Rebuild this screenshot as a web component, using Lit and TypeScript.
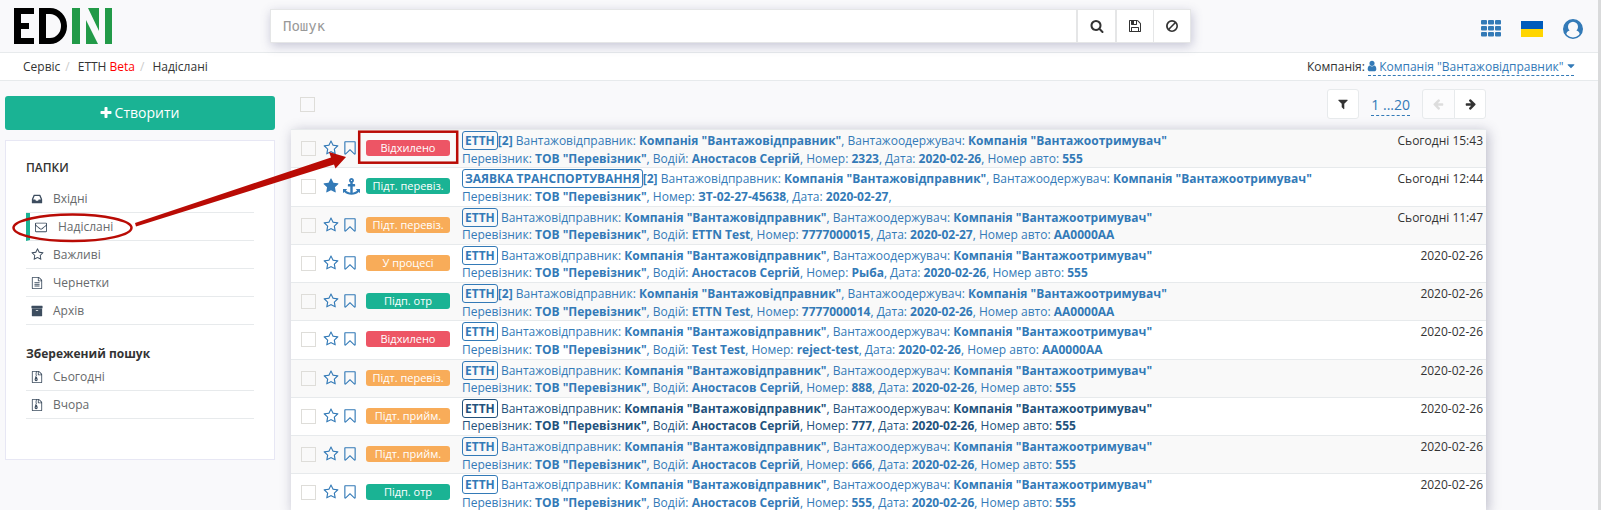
import { LitElement, html, css, svg } from "lit";
import { customElement, property } from "lit/decorators.js";

const PATHS: Record<string, string> = {
  "star-o": "M1201 1004l306-297-422-62-189-382-189 382-422 62 306 297-73 421 378-199 377 199zm527-357q0 22-26 48l-363 354 86 500q1 7 1 20 0 50-41 50-19 0-40-12l-449-236-449 236q-22 12-40 12-21 0-31.5-14.5t-10.5-35.5q0-6 2-20l86-500-364-354q-25-27-25-48 0-37 56-46l502-73 225-455q19-41 49-41t49 41l225 455 502 73q56 9 56 46z",
  star: "M1728 647q0 22-26 48l-363 354 86 500q1 7 1 20 0 21-10.5 35.5t-30.5 14.5q-19 0-40-12l-449-236-449 236q-22 12-40 12-21 0-31.5-14.5t-10.5-35.5q0-6 2-20l86-500-364-354q-25-27-25-48 0-37 56-46l502-73 225-455q19-41 49-41t49 41l225 455 502 73q56 9 56 46z",
  "bookmark-o": "M1408 256h-1024v1242l423-406 89-85 89 85 423 406v-1242zm12-128q23 0 44 9 33 13 52.5 41t19.5 62v1289q0 34-19.5 62t-52.5 41q-19 8-44 8-48 0-83-32l-441-424-441 424q-36 33-83 33-23 0-44-9-33-13-52.5-41t-19.5-62v-1289q0-34 19.5-62t52.5-41q21-9 44-9h1048z",
  anchor: "M960 256q0-26-19-45t-45-19-45 19-19 45 19 45 45 19 45-19 19-45zm832 928v352q0 22-20 30-8 2-12 2-12 0-23-9l-93-93q-119 143-318.500 226.500t-429.500 83.500-429.500-83.500-318.500-226.500l-93 93q-9 9-23 9-4 0-12-2-20-8-20-30v-352q0-14 9-23t23-9h352q22 0 30 20 8 19-7 35l-100 100q67 91 189.500 153.500t271.500 82.500v-647h-192q-26 0-45-19t-19-45v-128q0-26 19-45t45-19h192v-163q-58-34-93-92.500t-35-128.500q0-106 75-181t181-75 181 75 75 181q0 70-35 128.500t-93 92.500v163h192q26 0 45 19t19 45v128q0 26-19 45t-45 19h-192v647q149-20 271.500-82.500t189.500-153.500l-100-100q-15-16-7-35 8-20 30-20h352q14 0 23 9t9 23z",
  inbox: "M1151 960h316q-1-3-2.500-8t-2.500-8l-212-496h-708l-212 496q-1 2-2.500 8t-2.500 8h316l95 192h320zm513 30v482q0 26-19 45t-45 19h-1408q-26 0-45-19t-19-45v-482q0-62 25-123l238-552q10-25 36.500-42t52.500-17h832q26 0 52.500 17t36.500 42l238 552q25 61 25 123z",
  envelope: "M1664 1504v-768q-32 36-69 66-268 206-426 338-51 43-83 67t-86.500 48.500-102.500 24.500h-2q-48 0-102.500-24.500t-86.500-48.500-83-67q-158-132-426-338-37-30-69-66v768q0 13 9.500 22.500t22.500 9.500h1472q13 0 22.500-9.500t9.500-22.500zm0-1051v-24.500l-.5-13-3-12.500-5.500-9-9-7.500-14-2.500h-1472q-13 0-22.500 9.500t-9.500 22.500q0 168 147 284 193 152 401 317 6 5 35 29.500t46 37.500 44.500 31.500 50.500 27.500 43 9h2q20 0 43-9t50.500-27.500 44.500-31.500 46-37.500 35-29.500q208-165 401-317 54-43 100.500-115.500t46.500-131.500zm128-37v1088q0 66-47 113t-113 47h-1472q-66 0-113-47t-47-113v-1088q0-66 47-113t113-47h1472q66 0 113 47t47 113z",
  file: "M1596 380q28 28 48 76t20 88v1152q0 40-28 68t-68 28h-1344q-40 0-68-28t-28-68v-1600q0-40 28-68t68-28h896q40 0 88 20t76 48zm-444-244v376h376q-10-29-22-41l-313-313q-12-12-41-22zm384 1528v-1024h-416q-40 0-68-28t-28-68v-416h-768v1536h1280zm-1024-864q0-14 9-23t23-9h704q14 0 23 9t9 23v64q0 14-9 23t-23 9h-704q-14 0-23-9t-9-23v-64zm736 224q14 0 23 9t9 23v64q0 14-9 23t-23 9h-704q-14 0-23-9t-9-23v-64q0-14 9-23t23-9h704zm0 256q14 0 23 9t9 23v64q0 14-9 23t-23 9h-704q-14 0-23-9t-9-23v-64q0-14 9-23t23-9h704z",
  zip: "M1596 380q28 28 48 76t20 88v1152q0 40-28 68t-68 28h-1344q-40 0-68-28t-28-68v-1600q0-40 28-68t68-28h896q40 0 88 20t76 48zm-444-244v376h376q-10-29-22-41l-313-313q-12-12-41-22zm384 1528v-1024h-416q-40 0-68-28t-28-68v-416h-128v128h-128v-128h-512v1536h1280zM640 256h128v128h-128zM768 384h128v128h-128zM640 512h128v128h-128zM768 640h128v128h-128zM640 768h128v128h120l110 350q12 150-60 210t-170 60-170-60-60-210l102-350zM768 1216q-110 0-110 64t110 64 110-64-110-64z",
  archive: "M1088 832q0-26-19-45t-45-19h-256q-26 0-45 19t-19 45 19 45 45 19h256q26 0 45-19t19-45zm576-192v960q0 26-19 45t-45 19h-1408q-26 0-45-19t-19-45v-960q0-26 19-45t45-19h1408q26 0 45 19t19 45zm64-448v256q0 26-19 45t-45 19h-1536q-26 0-45-19t-19-45v-256q0-26 19-45t45-19h1536q26 0 45 19t19 45z",
  search: "M1216 832q0-185-131.500-316.500t-316.500-131.500-316.500 131.500-131.500 316.500 131.500 316.500 316.500 131.500 316.500-131.500 131.500-316.500zm512 832q0 52-38 90t-90 38q-54 0-90-38l-343-342q-179 124-399 124-143 0-273.500-55.500t-225-150-150-225-55.500-273.500 55.500-273.500 150-225 225-150 273.500-55.500 273.500 55.500 225 150 150 225 55.500 273.500q0 220-124 399l343 343q37 37 37 90z",
  save: "M512 1536h768v-384h-768v384zm896 0h128v-896q0-14-10-38.500t-20-34.500l-281-281q-10-10-34-20t-39-10v416q0 40-28 68t-68 28h-576q-40 0-68-28t-28-68v-416h-128v1280h128v-416q0-40 28-68t68-28h832q40 0 68 28t28 68v416zm-384-928v-320q0-13-9.500-22.500t-22.500-9.500h-192q-13 0-22.500 9.500t-9.500 22.500v320q0 13 9.500 22.500t22.500 9.500h192q13 0 22.500-9.500t9.500-22.500zm640 32v928q0 40-28 68t-68 28h-1344q-40 0-68-28t-28-68v-1344q0-40 28-68t68-28h928q40 0 88 20t76 48l280 280q28 28 48 76t20 88z",
  ban: "M896 128a768 768 0 1 0 0 1536a768 768 0 1 0 0-1536zm0 222a546 546 0 0 1 307 94L444 1203A546 546 0 0 1 896 350zm452 239A546 546 0 0 1 589 1348z",
  filter: "M1595 295q17 41-14 70l-493 493v742q0 42-39 59-13 5-25 5-27 0-45-19l-256-256q-19-19-19-45v-486l-493-493q-31-29-14-70 17-39 59-39h1280q42 0 59 39z",
  right: "M1728 960q0 54-37 91l-651 651q-39 37-91 37-51 0-90-37l-75-75q-38-38-38-91t38-91l293-293h-704q-52 0-84.500-37.500t-32.500-90.500v-128q0-53 32.500-90.500t84.500-37.500h704l-293-294q-38-36-38-90t38-90l75-75q38-38 90-38 53 0 91 38l651 651q37 35 37 90z",
  plus: "M1600 736v192q0 40-28 68t-68 28h-416v416q0 40-28 68t-68 28h-192q-40 0-68-28t-28-68v-416h-416q-40 0-68-28t-28-68v-192q0-40 28-68t68-28h416v-416q0-40 28-68t68-28h192q40 0 68 28t28 68v416h416q40 0 68 28t28 68z",
  user: "M1536 1399q0 109-62.500 187t-150.500 78h-854q-88 0-150.500-78t-62.500-187q0-85 8.500-160.500t31.500-152 58.500-131 94-89 134.500-34.500q131 128 313 128t313-128q76 0 134.500 34.500t94 89 58.500 131 31.500 152 8.500 160.500zm-256-887q0 159-112.500 271.500t-271.500 112.500-271.500-112.500-112.500-271.500 112.500-271.500 271.500-112.500 271.500 112.500 112.500 271.500z",
  caret: "M1408 704q0 26-19 45l-448 448q-19 19-45 19t-45-19l-448-448q-19-19-19-45t19-45 45-19h896q26 0 45 19t19 45z",
};

const icon = (name: string, size: number, cls = "") =>
  html`<svg class="ic ${cls}" width=${size} height=${size} viewBox="0 0 1792 1792" fill="currentColor"><path fill-rule=${name === "zip" || name === "ban" ? "evenodd" : "nonzero"} d=${PATHS[name]}></path></svg>`;

interface Doc {
  status: string;
  tone: "red" | "green" | "orange";
  type?: string;
  count?: boolean;
  marked?: boolean;
  visited?: boolean;
  driver?: string;
  num: string;
  date: string;
  car?: string;
  time: string;
}

const AS = "Аностасов Сергій";
const D = "2020-02-26";
const DOCS: Doc[] = [
  { status: "Відхилено", tone: "red", count: true, driver: AS, num: "2323", date: D, car: "555", time: "Сьогодні 15:43" },
  { status: "Підт. перевіз.", tone: "green", type: "ЗАЯВКА ТРАНСПОРТУВАННЯ", count: true, marked: true, num: "ЗТ-02-27-45638", date: "2020-02-27", time: "Сьогодні 12:44" },
  { status: "Підт. перевіз.", tone: "orange", driver: "ETTN Test", num: "7777000015", date: "2020-02-27", car: "AA0000AA", time: "Сьогодні 11:47" },
  { status: "У процесі", tone: "orange", driver: AS, num: "Рыба", date: D, car: "555", time: D },
  { status: "Підп. отр", tone: "green", count: true, driver: "ETTN Test", num: "7777000014", date: D, car: "AA0000AA", time: D },
  { status: "Відхилено", tone: "red", driver: "Test Test", num: "reject-test", date: D, car: "AA0000AA", time: D },
  { status: "Підт. перевіз.", tone: "orange", driver: AS, num: "888", date: D, car: "555", time: D },
  { status: "Підт. прийм.", tone: "orange", visited: true, driver: AS, num: "777", date: D, car: "555", time: D },
  { status: "Підт. прийм.", tone: "orange", driver: AS, num: "666", date: D, car: "555", time: D },
  { status: "Підп. отр", tone: "green", driver: AS, num: "555", date: D, car: "555", time: D },
];

@customElement("doc-row")
class DocRow extends LitElement {
  @property({ attribute: false }) doc!: Doc;
  static styles = css`
    :host { display: flex; box-sizing: border-box; height: 38.25px; border-top: 1px solid #e7eaec; color: #337ab7; line-height: 17.14px; }
    .box { box-sizing: border-box; width: 15px; height: 15px; border: 1px solid #deddd9; margin: 11px 0 0 10px; flex: none; }
    .ic { display: block; flex: none; }
    .marks { display: flex; width: 38px; margin: 10px 0 0 7px; gap: 3px; flex: none; }
    .anchor { margin-left: 1px; }
    .label { width: 84px; height: 16px; flex: none; margin: 10px 0 0 5px; border-radius: 3px; color: #fff; font-size: 11px; line-height: 16.5px; text-align: center; }
    .red { background: #ed5565; }
    .green { background: #1ab394; }
    .orange { background: #f8ac59; }
    .text { flex: 1; margin: 2px 0 0 12px; white-space: nowrap; }
    .type { display: inline-block; box-sizing: border-box; height: 19px; border: 1px solid currentColor; border-radius: 3px; padding: 0 2px; line-height: 17px; margin: -1px 0; vertical-align: top; font-weight: bold; }
    .first { height: 17.5px; line-height: 18px; }
    .visited { color: #23527c; }
    .time { color: #333; margin: 2px 3px 0 0; }
  `;
  render() {
    const d = this.doc;
    return html`
      <span class="box"></span>
      <span class="marks">${icon(d.marked ? "star" : "star-o", 16)}${d.marked ? icon("anchor", 17, "anchor") : icon("bookmark-o", 16)}</span>
      <span class="label ${d.tone}">${d.status}</span>
      <div class="text ${d.visited ? "visited" : ""}">
        <div class="first"><span class="type">${d.type ?? "ЕТТН"}</span>${d.count ? html`<b>[2]</b>` : ""} Вантажовідправник: <b>Компанія "Вантажовідправник"</b>, Вантажоодержувач: <b>Компанія "Вантажоотримувач"</b></div>
        <div>Перевізник: <b>ТОВ "Перевізник"</b>, ${d.driver ? html`Водій: <b>${d.driver}</b>, ` : ""}Номер: <b>${d.num}</b>, Дата: <b>${d.date}</b>, ${d.car ? html`Номер авто: <b>${d.car}</b>` : ""}</div>
      </div>
      <span class="time">${d.time}</span>`;
  }
}

@customElement("app-root")
class AppRoot extends LitElement {
  static styles = css`
    :host { display: flex; position: relative; width: 1601px; height: 510px; overflow: hidden; background: #d9dadb; font: 12px/17.14px "Open Sans", "Noto Sans", sans-serif; color: #333; }
    .page { width: 1598px; height: 510px; background: #f9f9fb; overflow: hidden; }
    .ic { display: block; flex: none; }
    header { display: flex; box-sizing: border-box; height: 52px; }
    .logo { display: block; margin: 8px 0 0 14px; flex: none; }
    .search { display: flex; box-sizing: border-box; width: 921px; height: 34px; margin: 9px 0 0 158px; border: 1px solid #e5e6e7; background: #fff; box-shadow: 1px 3px 10px rgba(80, 80, 130, .3); }
    .field { flex: 1; padding-left: 12px; font: 14px/32px "DejaVu Sans Mono", monospace; color: #999; }
    .search .btn { display: flex; align-items: center; justify-content: center; box-sizing: border-box; width: 37px; border-left: 1px solid #e5e6e7; }
    .search .btn.wide { width: 39px; border-left-width: 2px; }
    .search .btn.mid { width: 38px; border-left-width: 2px; }
    .tools { display: flex; align-items: center; gap: 20px; margin: 5px 15px 0 auto; color: #337ab7; }
    .flag { width: 22px; height: 16px; background: linear-gradient(#005bbb 50%, #ffd500 50%); }
    .crumbs { display: flex; box-sizing: border-box; height: 29px; padding: 0 24px 0 23px; line-height: 28px; border: solid #e7eaec; border-width: 1px 0; background: #fff; white-space: pre; }
    .sep { color: #ccc; padding: 0 8px 0 5px; }
    .beta { color: #f00; }
    .company { display: flex; margin-left: auto; }
    .link { display: flex; align-items: center; box-sizing: border-box; height: 21px; margin: 2px 0 0 3px; color: #337ab7; line-height: 20px; border-bottom: 1px dashed #337ab7; }
    .link .lbl { padding-top: 3px; }
    .link .person { margin: 2px 1px 0 -1.700px; }
    .link .down { margin: 2px -2.500px 0 1px; }
    .body { display: flex; }
    aside { width: 270px; margin: 15px 0 0 5px; flex: none; }
    .create { display: flex; align-items: center; justify-content: center; gap: 2px; box-sizing: border-box; height: 34px; padding-right: 2px; border-radius: 3px; background: #1ab394; color: #fff; font-size: 14px; }
    .panel { box-sizing: border-box; height: 320px; margin-top: 10px; padding: 17px 20px 0; background: #fff; border: 1px solid #e7e7f4; }
    h5 { margin: 0; font-size: 12px; line-height: 19px; font-weight: 600; }
    h5.bold { font-weight: bold; margin-top: 19px; }
    .item { display: flex; align-items: center; box-sizing: border-box; height: 28px; padding-left: 4.500px; border-bottom: 1px solid #e7eaec; color: #676a6c; font-size: 12px; }
    .item .glyph { width: 22.500px; color: #3d4d5f; }
    .item.active { border-left: 4px solid #1ab394; padding-left: 5px; }
    .item.active .glyph { width: 23px; }
    .list1 { margin-top: 8px; }
    main { width: 1195px; margin-left: 16px; }
    .bar { display: flex; height: 48px; }
    .box { box-sizing: border-box; width: 15px; height: 15px; border: 1px solid #deddd9; margin: 16px 0 0 9px; }
    .button { box-sizing: border-box; display: flex; align-items: center; justify-content: center; width: 32px; height: 30px; margin-top: 8px; border: 1px solid #e7eaec; border-radius: 3px; background: #fff; }
    .push { margin-left: auto; }
    .range { box-sizing: border-box; margin: 14px 12px 0; height: 21px; border-bottom: 1px dashed #337ab7; color: #337ab7; font-size: 14px; line-height: 20px; }
    .prev { border-radius: 3px 0 0 3px; width: 33px; color: #ddd; background: #fcfcfd; }
    .next { border-radius: 0 3px 3px 0; margin-left: -1px; }
    .flip { transform: scaleX(-1); }
    .rows { box-shadow: 2px 2px 12px rgba(60, 60, 100, .33); }
    .rows doc-row:nth-child(odd) { background: #f9f9f9; }
    .rows doc-row:nth-child(even) { background: #fff; }
    .notes { position: absolute; left: 0; top: 0; }
  `;
  item(name: string, label: string, active = false) {
    return html`<div class="item ${active ? "active" : ""}"><span class="glyph">${icon(name, name === "star-o" ? 13 : 12)}</span>${label}</div>`;
  }
  render() {
    return html`
      <div class="page">
        <header>
          <svg class="logo" width="98" height="36" viewBox="0 0 98 36">
            <path d="M0 0h20v6H7v9h8v6H7v9h13v6H0z"></path>
            <path fill-rule="evenodd" d="M25 0h11a17 18 0 0 1 0 36H25zm7 6v24h4a11 12 0 0 0 0-24z"></path>
            <path fill="#229a48" d="M58 0h8v36h-8zM91 0h7v36h-7zM74 0h11v23zM72 12l12 24H72z"></path>
          </svg>
          <div class="search">
            <span class="field">Пошук</span>
            <span class="btn wide">${icon("search", 14)}</span>
            <span class="btn mid">${icon("save", 14)}</span>
            <span class="btn">${icon("ban", 14)}</span>
          </div>
          <div class="tools">
            <svg class="ic" width="20" height="17" viewBox="0 0 20 17" fill="currentColor">
              ${[0, 6, 12].map((y) => [0, 7, 14].map((x) => svg`<rect x=${x} y=${y} width="6" height="4.600" rx="1"></rect>`))}
            </svg>
            <span class="flag"></span>
            <svg class="ic" width="20" height="20" viewBox="0 0 20 20">
              <circle cx="10" cy="10" r="9.200" fill="none" stroke="currentColor" stroke-width="1.600"></circle>
              <path fill="currentColor" d="M10 1a9 9 0 0 0-7 14.700c.6-2.500 1.800-4 3.600-4.200a5 5 0 1 1 6.800 0c1.800.2 3 1.700 3.600 4.200A9 9 0 0 0 10 1z"></path>
            </svg>
          </div>
        </header>
        <div class="crumbs"><span>Сервіс</span><span class="sep">/</span><span>ЕТТН <span class="beta">Beta</span></span><span class="sep">/</span><span>Надіслані</span><div class="company">Компанія:<span class="link">${icon("user", 12, "person")}<span class="lbl">Компанія "Вантажовідправник"</span>${icon("caret", 12, "down")}</span></div></div>
        <div class="body">
          <aside>
            <div class="create">${icon("plus", 14)}Створити</div>
            <div class="panel">
              <h5>ПАПКИ</h5>
              <div class="list1">
                ${this.item("inbox", "Вхідні")}${this.item("envelope", "Надіслані", true)}${this.item("star-o", "Важливі")}${this.item("file", "Чернетки")}${this.item("archive", "Архів")}
              </div>
              <h5 class="bold">Збережений пошук</h5>
              ${this.item("zip", "Сьогодні")}${this.item("zip", "Вчора")}
            </div>
          </aside>
          <main>
            <div class="bar">
              <span class="box"></span>
              <span class="button push">${icon("filter", 12)}</span>
              <span class="range">1 ...20</span>
              <span class="button prev">${icon("right", 12, "flip")}</span>
              <span class="button next">${icon("right", 12)}</span>
            </div>
            <div class="rows">${DOCS.map((d) => html`<doc-row .doc=${d}></doc-row>`)}</div>
          </main>
        </div>
      </div>
      <svg class="notes" width="500" height="260" viewBox="0 0 500 260">
        <ellipse cx="72.500" cy="227.800" rx="59" ry="13.200" fill="none" stroke="#b90b05" stroke-width="2.500"></ellipse>
        <path fill="#b90b05" d="M135 223L331 157.500L329 152L346 157L335.500 168.500L334 164.500L136 226.500z"></path>
        <rect x="359.200" y="131.700" width="98" height="31" fill="none" stroke="#b90b05" stroke-width="2.500"></rect>
      </svg>`;
  }
}
